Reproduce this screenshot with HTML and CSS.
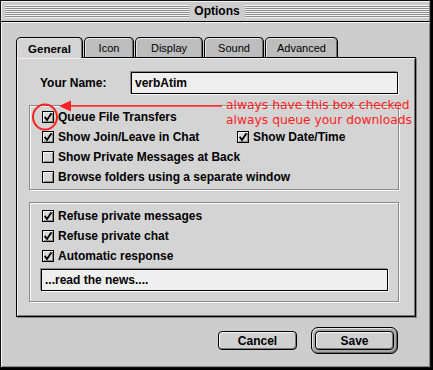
FILE: index.html
```html
<!DOCTYPE html>
<html lang="en">
<head>
    <meta charset="UTF-8">
    <meta name="viewport" content="width=device-width, initial-scale=1.0">
    <title>Options</title>
    <link rel="stylesheet" href="styles.css">
</head>
<body>
    <div class="window">
        <div class="titlebar">
            <span class="stripes"></span>
            <h1 class="title">Options</h1>
            <span class="stripes"></span>
        </div>
        <div class="content">
            <div class="tabs">
                <div class="tab active">General</div>
                <div class="tab">Icon</div>
                <div class="tab">Display</div>
                <div class="tab">Sound</div>
                <div class="tab">Advanced</div>
            </div>
            <div class="panel">
                <div class="name-row">
                    <label class="name-label">Your Name:</label>
                    <div class="field">verbAtim</div>
                </div>
                <div class="group group-first">
                    <div class="row">
                        <span class="box"><svg viewBox="0 0 10 10"><path d="M2.2 5.6 L4 8 L8 2"/></svg></span>
                        <span>Queue File Transfers</span>
                    </div>
                    <div class="row row-split">
                        <div class="row">
                            <span class="box"><svg viewBox="0 0 10 10"><path d="M2.2 5.6 L4 8 L8 2"/></svg></span>
                            <span>Show Join/Leave in Chat</span>
                        </div>
                        <div class="row">
                            <span class="box"><svg viewBox="0 0 10 10"><path d="M2.2 5.6 L4 8 L8 2"/></svg></span>
                            <span>Show Date/Time</span>
                        </div>
                    </div>
                    <div class="row">
                        <span class="box"></span>
                        <span>Show Private Messages at Back</span>
                    </div>
                    <div class="row">
                        <span class="box"></span>
                        <span>Browse folders using a separate window</span>
                    </div>
                </div>
                <div class="group group-second">
                    <div class="row">
                        <span class="box"><svg viewBox="0 0 10 10"><path d="M2.2 5.6 L4 8 L8 2"/></svg></span>
                        <span>Refuse private messages</span>
                    </div>
                    <div class="row">
                        <span class="box"><svg viewBox="0 0 10 10"><path d="M2.2 5.6 L4 8 L8 2"/></svg></span>
                        <span>Refuse private chat</span>
                    </div>
                    <div class="row">
                        <span class="box"><svg viewBox="0 0 10 10"><path d="M2.2 5.6 L4 8 L8 2"/></svg></span>
                        <span>Automatic response</span>
                    </div>
                    <div class="field field-wide">...read the news....</div>
                </div>
            </div>
            <div class="buttons">
                <button class="btn">Cancel</button>
                <div class="default-ring">
                    <button class="btn">Save</button>
                </div>
            </div>
        </div>

        <!-- red annotation drawn over the dialog -->
        <svg class="annotation" width="433" height="370" viewBox="0 0 433 370">
            <ellipse cx="45" cy="117" rx="12" ry="12.5" fill="none" stroke="#ff2020" stroke-width="2"/>
            <line x1="68" y1="106" x2="222" y2="106" stroke="#ff2020" stroke-width="1.5"/>
            <polygon points="59,106 71,100.5 71,111.5" fill="#ff2020"/>
        </svg>
        <p class="note">always have this box checked<br>always queue your downloads</p>
    </div>
</body>
</html>
```

FILE: styles.css
```css
*,
*::before,
*::after {
    box-sizing: border-box;
    padding: 0;
    margin: 0;
}

body {
    background: #000;
    font-family: "Liberation Sans", Arial, sans-serif;
    font-size: 12px;
    font-weight: bold;
    color: #000;
}

.window {
    position: relative;
    width: 431px;
    height: 368px;
    border: 1px solid #111;
    background: #cdcdcd;
    display: flex;
    flex-direction: column;
}

.titlebar {
    height: 21px;
    display: flex;
    align-items: center;
    padding: 0 1px 0 4px;
    background: #cccccc;
    border-bottom: 1px solid #000;
    box-shadow: inset 1px 1px 0 #f2f2f2, inset -1px 0 0 #888;
}

.stripes {
    flex: 1;
    height: 13px;
    margin-top: 1px;
    background: repeating-linear-gradient(to bottom, #f4f4f4 0, #f4f4f4 1px, #8c8c8c 1px, #8c8c8c 2px);
    border-bottom: 1px solid #f4f4f4;
}

.title {
    font-size: 12px;
    padding: 0 5px;
    line-height: 14px;
}

.content {
    flex: 1;
    display: flex;
    flex-direction: column;
    padding: 15px 14px 0 15px;
    box-shadow: inset 1px 1px 0 #f4f4f4, inset -1px -1px 0 #888;
}

.tabs {
    display: grid;
    grid-template-columns: 67px 50px 68px 60px 73px;
    column-gap: 1px;
    align-items: end;
    height: 20px;
}

.tab {
    height: 20px;
    border: 1px solid #000;
    border-bottom: none;
    border-radius: 5px 5px 0 0;
    background: #bdbdbd;
    box-shadow: inset 1px 1px 0 #e6e6e6, inset -1px 0 0 #6e6e6e;
    font-size: 11px;
    font-weight: normal;
    display: flex;
    align-items: center;
    justify-content: center;
    padding-top: 1px;
}

.tab.active {
    position: relative;
    z-index: 1;
    height: 21px;
    margin-bottom: -1px;
    background: #d4d4d4;
    font-weight: bold;
    font-size: 11.5px;
}

.panel {
    width: 400px;
    border: 1px solid #000;
    background: #d4d4d4;
    box-shadow: inset 1px 1px 0 #f0f0f0, inset -1px -1px 0 #777, 1px 1px 0 #888;
    padding: 14px 16px 14px 12px;
}

.name-row {
    display: flex;
    align-items: center;
    padding-left: 11px;
}

.name-label {
    width: 91px;
}

.field {
    height: 22px;
    border: 1px solid #000;
    background: #efefef;
    box-shadow: -1px -1px 0 #8a8a8a, 1px 1px 0 #fafafa;
    display: flex;
    align-items: center;
    padding: 0 3px 1px;
    flex: 1;
    margin-right: 1px;
}

.group {
    border: 1px solid #8a8a8a;
    box-shadow: inset 1px 1px 0 #fafafa, 1px 1px 0 #fafafa;
    padding-left: 12px;
}

.group-first {
    margin-top: 11px;
    height: 85px;
    padding-top: 1px;
}

.group-second {
    margin-top: 12px;
    height: 100px;
    padding-top: 3px;
}

.row {
    height: 20px;
    display: flex;
    align-items: center;
    gap: 4px;
}

.row-split {
    display: grid;
    grid-template-columns: 195px auto;
    column-gap: 0;
}

.box {
    width: 12px;
    height: 12px;
    flex: none;
    border: 1px solid #000;
    background: #d8d8d8;
    box-shadow: inset 1px 1px 0 #f6f6f6, inset -1px -1px 0 #8a8a8a;
    display: flex;
}

.box svg {
    width: 10px;
    height: 10px;
}

.box path {
    fill: none;
    stroke: #000;
    stroke-width: 1.8;
    stroke-linecap: square;
}

.field-wide {
    flex: none;
    margin: 3px 10px 0 -1px;
}

.buttons {
    display: flex;
    align-items: center;
    justify-content: flex-end;
    gap: 14px;
    margin-top: 10px;
    padding-right: 18px;
}

.btn {
    width: 79px;
    height: 19px;
    border: 1px solid #000;
    border-radius: 4px;
    background: #d0d0d0;
    box-shadow: inset 1px 1px 0 #f4f4f4, inset -1px -1px 0 #7a7a7a;
    font-family: inherit;
    font-size: 12px;
    font-weight: bold;
    color: #000;
}

.default-ring {
    border: 1px solid #000;
    border-radius: 7px;
    padding: 3px;
    background: #a8a8a8;
    box-shadow: inset 1px 1px 0 #e8e8e8, inset -1px -1px 0 #666;
    display: flex;
}

.annotation {
    position: absolute;
    left: -1px;
    top: -1px;
    pointer-events: none;
}

.note {
    position: absolute;
    left: 225px;
    top: 97px;
    font-family: "DejaVu Sans", Verdana, sans-serif;
    font-weight: normal;
    font-size: 12.3px;
    line-height: 15px;
    color: #ff2020;
}
```
